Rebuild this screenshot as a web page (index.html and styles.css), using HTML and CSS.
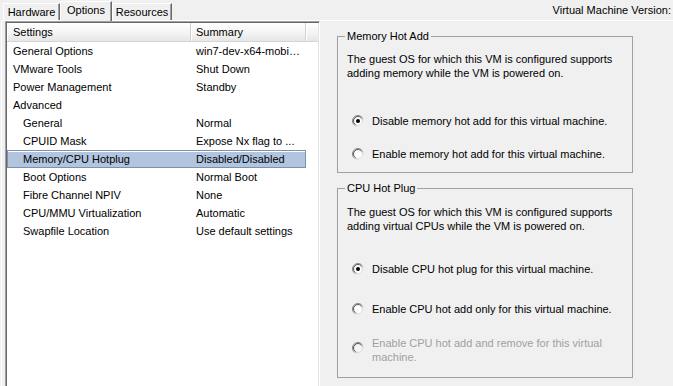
FILE: index.html
```html
<!DOCTYPE html>
<html>
<head>
<meta charset="utf-8">
<link rel="stylesheet" href="styles.css">
</head>
<body>
<svg class="defs" width="0" height="0" aria-hidden="true">
  <defs>
    <linearGradient id="rOuter" x1="0" y1="0" x2="1" y2="1">
      <stop offset="0" stop-color="#7a7a7a"/>
      <stop offset="0.45" stop-color="#8a8a8a"/>
      <stop offset="0.7" stop-color="#e8e8e8"/>
      <stop offset="1" stop-color="#ffffff"/>
    </linearGradient>
    <linearGradient id="rInner" x1="0" y1="0" x2="1" y2="1">
      <stop offset="0" stop-color="#404040"/>
      <stop offset="0.45" stop-color="#606060"/>
      <stop offset="0.7" stop-color="#d8d8d8"/>
      <stop offset="1" stop-color="#e3e3e3"/>
    </linearGradient>
  </defs>
</svg>
<div class="window">
  <div class="topbar">
    <div class="tabs">
      <div class="tab tab-hw">Hardware</div>
      <div class="tab tab-opt active">Options</div>
      <div class="tab tab-res">Resources</div>
    </div>
    <div class="version">Virtual Machine Version:</div>
  </div>
  <div class="page">
    <div class="listbox">
      <div class="lhead">
        <div class="hc c1">Settings</div>
        <div class="hc c2">Summary</div>
        <div class="hc c3"></div>
      </div>
      <div class="row"><span class="c1">General Options</span><span class="c2">win7-dev-x64-mobi…</span></div>
      <div class="row"><span class="c1">VMware Tools</span><span class="c2">Shut Down</span></div>
      <div class="row"><span class="c1">Power Management</span><span class="c2">Standby</span></div>
      <div class="row"><span class="c1">Advanced</span><span class="c2"></span></div>
      <div class="row sub"><span class="c1">General</span><span class="c2">Normal</span></div>
      <div class="row sub"><span class="c1">CPUID Mask</span><span class="c2">Expose Nx flag to ...</span></div>
      <div class="row sub sel"><span class="c1">Memory/CPU Hotplug</span><span class="c2">Disabled/Disabled</span></div>
      <div class="row sub"><span class="c1">Boot Options</span><span class="c2">Normal Boot</span></div>
      <div class="row sub"><span class="c1">Fibre Channel NPIV</span><span class="c2">None</span></div>
      <div class="row sub"><span class="c1">CPU/MMU Virtualization</span><span class="c2">Automatic</span></div>
      <div class="row sub"><span class="c1">Swapfile Location</span><span class="c2">Use default settings</span></div>
    </div>
    <div class="right">
      <fieldset class="group g1">
        <legend>Memory Hot Add</legend>
        <p class="desc">The guest OS for which this VM is configured supports<br>adding memory while the VM is powered on.</p>
        <div class="opt o1">
          <svg class="radio" width="12" height="12" viewBox="0 0 12 12"><circle cx="6" cy="6" r="5.5" fill="none" stroke="url(#rOuter)"/><circle cx="6" cy="6" r="4.5" fill="#fff" stroke="url(#rInner)"/><circle cx="6" cy="6" r="2" fill="#000"/></svg>
          <span>Disable memory hot add for this virtual machine.</span>
        </div>
        <div class="opt o2">
          <svg class="radio" width="12" height="12" viewBox="0 0 12 12"><circle cx="6" cy="6" r="5.5" fill="none" stroke="url(#rOuter)"/><circle cx="6" cy="6" r="4.5" fill="#fff" stroke="url(#rInner)"/></svg>
          <span>Enable memory hot add for this virtual machine.</span>
        </div>
      </fieldset>
      <fieldset class="group g2">
        <legend>CPU Hot Plug</legend>
        <p class="desc d2">The guest OS for which this VM is configured supports<br>adding virtual CPUs while the VM is powered on.</p>
        <div class="opt c-o1">
          <svg class="radio" width="12" height="12" viewBox="0 0 12 12"><circle cx="6" cy="6" r="5.5" fill="none" stroke="url(#rOuter)"/><circle cx="6" cy="6" r="4.5" fill="#fff" stroke="url(#rInner)"/><circle cx="6" cy="6" r="2" fill="#000"/></svg>
          <span>Disable CPU hot plug for this virtual machine.</span>
        </div>
        <div class="opt c-o2">
          <svg class="radio" width="12" height="12" viewBox="0 0 12 12"><circle cx="6" cy="6" r="5.5" fill="none" stroke="url(#rOuter)"/><circle cx="6" cy="6" r="4.5" fill="#fff" stroke="url(#rInner)"/></svg>
          <span>Enable CPU hot add only for this virtual machine.</span>
        </div>
        <div class="opt c-o3 disabled">
          <svg class="radio" width="12" height="12" viewBox="0 0 12 12"><circle cx="6" cy="6" r="5.5" fill="none" stroke="url(#rOuter)"/><circle cx="6" cy="6" r="4.5" fill="#f4f4f4" stroke="url(#rInner)"/></svg>
          <span>Enable CPU hot add and remove for this virtual<br>machine.</span>
        </div>
      </fieldset>
    </div>
  </div>
</div>
</body>
</html>
```
FILE: styles.css
```css
* { box-sizing: border-box; }
html, body { margin: 0; padding: 0; }
body {
  width: 673px;
  height: 386px;
  overflow: hidden;
  background: #f0f0f0;
  font-family: "Liberation Sans", Arial, sans-serif;
  font-size: 11px;
  color: #000;
}
.defs { display: block; width: 0; height: 0; }

.topbar {
  display: flex;
  justify-content: space-between;
  height: 20px;
}
.tabs {
  display: flex;
  align-items: flex-end;
  padding-left: 3px;
}
.tab {
  height: 17px;
  line-height: 16px;
  text-align: center;
  background: #f0f0f0;
  border-top: 1px solid #fff;
  border-left: 1px solid #fff;
  border-right: 1px solid #696969;
  box-shadow: inset -1px 0 #a0a0a0;
}
.tab-hw { width: 57px; }
.tab-opt { width: 52px; }
.tab-res { width: 60px; }
.tab.active {
  height: 20px;
  margin-bottom: -1px;
  position: relative;
}
.version {
  padding: 3px 2px 0 0;
  line-height: 14px;
}

.page {
  display: flex;
  height: 366px;
  margin-left: 1px;
  border-top: 1px solid #fff;
  border-left: 1px solid #fff;
}

.listbox {
  flex: none;
  width: 315px;
  height: 372px;
  margin-left: 3px;
  padding: 1px;
  background: #fff;
  border: 1px solid;
  border-color: #a0a0a0 #fff #fff #a0a0a0;
  box-shadow: inset 1px 1px #696969, inset -1px -1px #e3e3e3;
}
.lhead {
  display: flex;
  height: 19px;
  border-bottom: 1px solid #d5d5d5;
  background: linear-gradient(#ffffff, #f4f4f4 55%, #e6e6e6);
}
.hc {
  line-height: 18px;
  border-right: 1px solid #d0d0d0;
  box-shadow: inset 1px 0 #fff;
}
.c1 { width: 184px; padding-left: 6px; flex: none; }
.c2 { width: 115px; padding-left: 5px; flex: none; white-space: nowrap; overflow: hidden; }
.hc.c3 { width: 12px; border-right: none; }

.row {
  display: flex;
  width: 299px;
  height: 18px;
  line-height: 18px;
}
.row.sub .c1 { padding-left: 16px; }
.row.sel {
  background: #b2c5df;
  box-shadow: inset 0 0 0 1px #7d91af, inset 0 1px 0 1px #fff;
}

.right {
  padding: 8px 0 0 17px;
}
.group {
  width: 296px;
  margin: 0;
  padding: 0 9px 11px 9px;
  border: 1px solid #a0a0a0;
  min-width: 0;
}
.group legend {
  padding: 0 2px;
  margin-left: -2px;
  line-height: 14px;
}
.g2 { margin-top: 8px; padding-bottom: 13px; }
.desc {
  margin: 9px 0 0;
  line-height: 14px;
}
.desc.d2 { margin-top: 10px; }
.opt {
  display: flex;
  align-items: flex-start;
  gap: 8px;
  padding-left: 5px;
  line-height: 14px;
}
.opt .radio { flex: none; margin-top: 1px; }
.o1 { margin-top: 34px; }
.o2 { margin-top: 19px; }
.c-o1 { margin-top: 29px; }
.c-o2 { margin-top: 26px; }
.c-o3 { margin-top: 20px; align-items: center; }
.c-o3 .radio { margin-top: 0; margin-bottom: 4px; }
.disabled { color: #a0a0a0; }
```
